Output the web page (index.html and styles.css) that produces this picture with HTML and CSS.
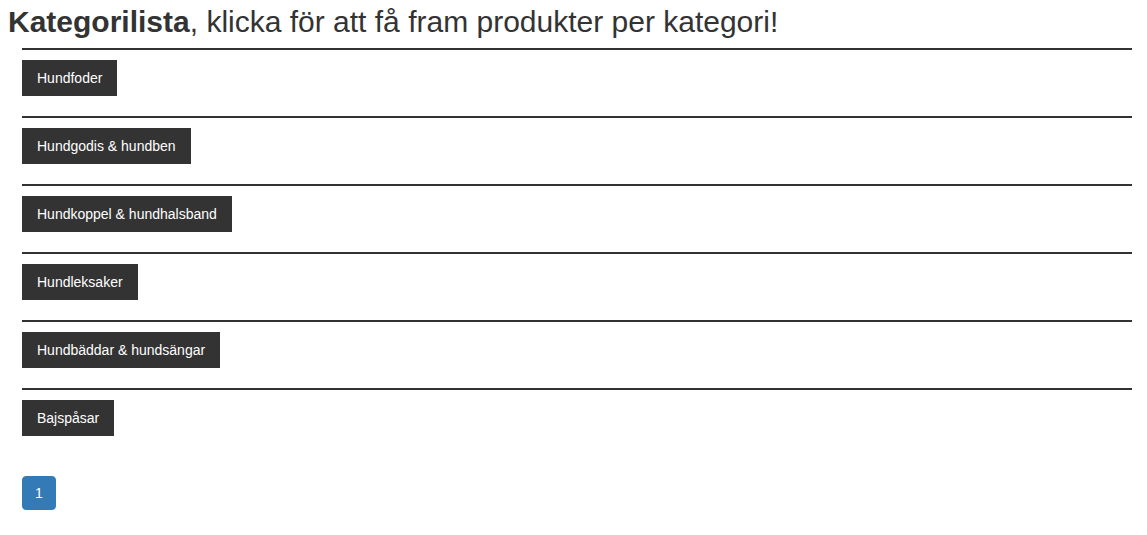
FILE: index.html
```html
<!DOCTYPE html>
<html lang="sv">
<head>
<meta charset="utf-8">
<title>Kategorilista</title>
<link rel="stylesheet" href="styles.css">
</head>
<body>
<h2 class="title"><strong>Kategorilista</strong>, klicka för att få fram produkter per kategori!</h2>
<div class="content">
  <ul class="cat-list">
    <li class="cat-item"><a class="cat-btn" href="#">Hundfoder</a></li>
    <li class="cat-item"><a class="cat-btn" href="#">Hundgodis &amp; hundben</a></li>
    <li class="cat-item"><a class="cat-btn" href="#">Hundkoppel &amp; hundhalsband</a></li>
    <li class="cat-item"><a class="cat-btn" href="#">Hundleksaker</a></li>
    <li class="cat-item"><a class="cat-btn" href="#">Hundbäddar &amp; hundsängar</a></li>
    <li class="cat-item"><a class="cat-btn" href="#">Bajspåsar</a></li>
  </ul>
  <ul class="pagination">
    <li><a class="page-link active" href="#">1</a></li>
  </ul>
</div>
</body>
</html>
```
FILE: styles.css
```css
html, body {
  background: #fff;
}
body {
  margin: 0 8px;
  font-family: "Liberation Sans", Arial, Helvetica, sans-serif;
  font-size: 14px;
  line-height: 20px;
  color: #333;
}
.title {
  margin: 5px 0 10px;
  font-size: 30px;
  line-height: 33px;
  font-weight: 400;
  color: #333;
}
.title strong {
  font-weight: 700;
}
.content {
  margin: 0 7px 0 14px;
}
.cat-list {
  list-style: none;
  margin: 0;
  padding: 0;
}
.cat-item {
  border-top: 2px solid #333;
  padding: 10px 0 20px;
}
.cat-btn {
  display: inline-block;
  background: #333;
  color: #fff;
  text-decoration: none;
  padding: 8px 15px;
  font-size: 14px;
  line-height: 20px;
}
.pagination {
  list-style: none;
  margin: 20px 0;
  padding: 0;
  display: flex;
}
.page-link {
  display: block;
  padding: 6px 12px;
  line-height: 20px;
  border: 1px solid #337ab7;
  background: #337ab7;
  color: #fff;
  text-decoration: none;
  border-radius: 4px;
}
```
